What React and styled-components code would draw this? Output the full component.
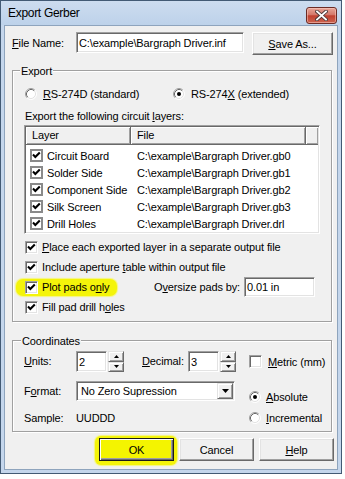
import React from 'react';
import styled, { createGlobalStyle } from 'styled-components';

const Global = createGlobalStyle`
  html, body { margin: 0; padding: 0; background: #fff; }
  body {
    font-family: "Liberation Sans", Arial, sans-serif;
    font-size: 11px;
    letter-spacing: -0.12px;
    color: #000;
  }
  #root { width: 345px; height: 479px; }
`;

const Window = styled.div`
  box-sizing: border-box;
  width: 342px;
  height: 474px;
  border: 1px solid #435a74;
  background: #c4d6ec;
  padding: 0 3px 3px 3px;
  display: flex;
  flex-direction: column;
`;

const TitleBar = styled.div`
  height: 24px;
  flex: none;
  display: flex;
  align-items: flex-start;
  justify-content: space-between;
  padding: 0 1px 0 4px;
  background: linear-gradient(#cddcef, #bdd2ea);
  margin: 0 -3px;
  padding-left: 7px;
  padding-right: 4px;
`;

const Title = styled.div`
  font-size: 12px;
  letter-spacing: -0.3px;
  line-height: 24px;
`;

const CloseBtn = styled.div`
  width: 31px;
  height: 17px;
  box-sizing: border-box;
  margin-top: 6px;
  border: 1px solid #6b2b25;
  border-radius: 3px;
  background: linear-gradient(#e7a597 0%, #d4786a 45%, #c0402f 52%, #cc6450 100%);
  box-shadow: inset 0 0 0 1px rgba(255, 210, 200, 0.5);
  display: flex;
  align-items: center;
  justify-content: center;
`;

const Client = styled.div`
  flex: 1;
  background: #f0f0f0;
  border: 1px solid #8ea4bd;
  padding: 6px 3px 0 7px;
  display: flex;
  flex-direction: column;
`;

const U = styled.span`
  text-decoration: underline;
  text-underline-offset: 1px;
`;

const FileRow = styled.div`
  display: flex;
  align-items: flex-start;
  height: 23px;
`;

const FieldLabel = styled.span`
  flex: none;
  width: ${(p) => p.$w}px;
  line-height: ${(p) => p.$lh || 21}px;
  white-space: nowrap;
`;

const TextBox = styled.div`
  flex: none;
  box-sizing: border-box;
  width: ${(p) => p.$w}px;
  height: ${(p) => p.$h || 21}px;
  margin-right: ${(p) => p.$mr || 0}px;
  background: #fff;
  border: 1px solid;
  border-color: #a0a0a0 #fff #fff #a0a0a0;
  box-shadow: inset 1px 1px #696969, inset -1px -1px #e3e3e3;
  padding: 0 2px;
  display: flex;
  align-items: center;
  white-space: nowrap;
  overflow: hidden;
`;

const PushButton = styled.button`
  flex: none;
  box-sizing: border-box;
  width: ${(p) => p.$w || 75}px;
  height: 23px;
  padding: 0;
  font: inherit;
  letter-spacing: inherit;
  color: #000;
  background: ${(p) => (p.$yellow ? '#f4f400' : '#f0f0f0')};
  border: 1px solid;
  border-color: #fff #696969 #696969 #fff;
  box-shadow: inset -1px -1px #a0a0a0, inset 1px 1px #e3e3e3;
  ${(p) =>
    p.$default &&
    `
    border: 1px solid #1a1a1a;
    box-shadow: inset 1px 1px #fff, inset -1px -1px #696969, inset -2px -2px #a0a0a0;
  `}
`;

const Group = styled.div`
  position: relative;
  box-sizing: border-box;
  width: 320px;
  margin-top: ${(p) => p.$mt}px;
  padding: ${(p) => p.$pad};
  border: 1px solid #a0a0a0;
  box-shadow: inset 1px 1px #fff, 1px 1px #fff;
`;

const Legend = styled.span`
  position: absolute;
  left: ${(p) => p.$x}px;
  top: -7px;
  padding: 0 1px;
  background: #f0f0f0;
  line-height: 14px;
`;

const RadioRow = styled.div`
  display: flex;
  align-items: center;
  height: 16px;
  margin-top: ${(p) => p.$mt || 0}px;
`;

const OptionItem = styled.div`
  display: flex;
  align-items: center;
  gap: ${(p) => p.$gap || 6}px;
  width: ${(p) => (p.$w ? `${p.$w}px` : 'auto')};
  flex: none;
  white-space: nowrap;
`;

const Caption = styled.div`
  height: 14px;
  line-height: 14px;
  margin-top: ${(p) => p.$mt || 0}px;
`;

const ListBox = styled.div`
  box-sizing: border-box;
  width: 296px;
  height: 109px;
  margin: 2px 0 0 -1px;
  background: #fff;
  border: 1px solid;
  border-color: #a0a0a0 #fff #fff #a0a0a0;
  box-shadow: inset 1px 1px #696969, inset -1px -1px #e3e3e3;
  padding: 1px;
  display: flex;
  flex-direction: column;
`;

const Header = styled.div`
  display: flex;
  height: 18px;
  flex: none;
  background: #f0f0f0;
`;

const HeaderCell = styled.div`
  box-sizing: border-box;
  width: ${(p) => (p.$w ? `${p.$w}px` : 'auto')};
  flex: ${(p) => (p.$w ? 'none' : '1')};
  padding-left: 6px;
  line-height: 17px;
  box-shadow: inset 1px 1px #fff, inset -1px -1px #a0a0a0;
  border-right: 1px solid #696969;
  border-bottom: 1px solid #696969;
  ${(p) => !p.$w && 'border-right: none;'}
`;

const Rows = styled.div`
  display: flex;
  flex-direction: column;
  margin-top: 2px;
`;

const ListRow = styled.div`
  display: flex;
  align-items: center;
  height: 17px;
`;

const Cell = styled.div`
  box-sizing: border-box;
  width: ${(p) => p.$w}px;
  padding-left: ${(p) => p.$pl}px;
  display: flex;
  align-items: center;
  gap: 4px;
  white-space: nowrap;
`;

const CheckRow = styled.div`
  display: flex;
  align-items: center;
  height: 20px;
  margin-top: ${(p) => p.$mt || 0}px;
`;

const Highlight = styled.div`
  display: flex;
  align-items: center;
  gap: 4px;
  width: 120px;
  flex: none;
  padding: 2px 0 2px 9px;
  margin: -2px 0 -2px -9px;
  height: 20px;
`;

const Marker = styled.span`
  display: flex;
  align-items: center;
  gap: 4px;
  background: #f4f40a;
  border-radius: 7px;
  padding: 2px 8px 2px 9px;
  margin: -2px -8px -2px -9px;
  box-shadow: 0 0 1px 1px #f6f67a;
`;

const CheckBox = styled.span`
  box-sizing: border-box;
  flex: none;
  width: 13px;
  height: 13px;
  background: #fff;
  border: 1px solid;
  border-color: #a0a0a0 #fff #fff #a0a0a0;
  box-shadow: inset 1px 1px #696969, inset -1px -1px #e3e3e3;
  display: flex;
  align-items: center;
  justify-content: center;
  ${(p) =>
    p.$flat &&
    `
    border: 2px solid #8a8a8a;
    box-shadow: none;
  `}
`;

const CoordRow = styled.div`
  display: flex;
  align-items: center;
  height: 21px;
`;

const Spin = styled.div`
  display: flex;
  flex: none;
  gap: 1px;
`;

const SpinButtons = styled.div`
  display: flex;
  flex-direction: column;
  width: 16px;
  height: 21px;
`;

const SpinBtn = styled.div`
  box-sizing: border-box;
  flex: 1;
  background: #f0f0f0;
  border: 1px solid;
  border-color: #e3e3e3 #696969 #696969 #e3e3e3;
  box-shadow: inset 1px 1px #fff, inset -1px -1px #a0a0a0;
  display: flex;
  align-items: center;
  justify-content: center;
`;

const Spacer = styled.div`
  flex: none;
  width: ${(p) => p.$w}px;
`;

const Lower = styled.div`
  display: flex;
`;

const LeftCol = styled.div`
  width: 211px;
  flex: none;
  display: flex;
  flex-direction: column;
`;

const RightCol = styled.div`
  display: flex;
  flex-direction: column;
  gap: 5px;
  margin: 17px 0 0 14px;
`;

const FormatRow = styled.div`
  display: flex;
  align-items: center;
  height: 20px;
  margin-top: 9px;
`;

const Combo = styled.div`
  box-sizing: border-box;
  width: 159px;
  height: 20px;
  background: #fff;
  border: 1px solid;
  border-color: #a0a0a0 #fff #fff #a0a0a0;
  box-shadow: inset 1px 1px #696969, inset -1px -1px #e3e3e3;
  padding: 1px 1px 1px 4px;
  display: flex;
  align-items: center;
  justify-content: space-between;
`;

const ComboArrow = styled.div`
  box-sizing: border-box;
  width: 16px;
  height: 16px;
  background: #f0f0f0;
  border: 1px solid;
  border-color: #e3e3e3 #696969 #696969 #e3e3e3;
  box-shadow: inset 1px 1px #fff, inset -1px -1px #a0a0a0;
  display: flex;
  align-items: center;
  justify-content: center;
`;

const SampleRow = styled.div`
  display: flex;
  height: 14px;
  line-height: 14px;
  margin-top: 10px;
`;

const ButtonRow = styled.div`
  display: flex;
  justify-content: flex-end;
  gap: 5px;
  margin-top: 6px;
`;

const OkMark = styled.div`
  display: flex;
  background: #f4f40a;
  border-radius: 6px;
  padding: 2px 3px 4px 4px;
  margin: -2px -3px -4px -4px;
  box-shadow: 0 0 1px 1px #f6f67a;
`;

const Check = () => (
  <svg width="9" height="9" viewBox="0 0 9 9">
    <path d="M1 3.6 L3.3 5.9 L7.8 1.4" fill="none" stroke="#000" strokeWidth="2.1" />
  </svg>
);

const Radio = ({ on }) => (
  <svg width="12" height="12" viewBox="0 0 12 12" style={{ flex: 'none' }}>
    <circle cx="6" cy="6" r="5" fill="#fff" />
    <path d="M2.11 9.89 A5.5 5.5 0 0 1 9.89 2.11" fill="none" stroke="#a0a0a0" />
    <path d="M9.89 2.11 A5.5 5.5 0 0 1 2.11 9.89" fill="none" stroke="#fff" />
    <path d="M2.82 9.18 A4.5 4.5 0 0 1 9.18 2.82" fill="none" stroke="#696969" />
    <path d="M9.18 2.82 A4.5 4.5 0 0 1 2.82 9.18" fill="none" stroke="#e3e3e3" />
    {on && <circle cx="6" cy="6" r="2" fill="#000" />}
  </svg>
);

const Tri = ({ up }) => (
  <svg width="5" height="3" viewBox="0 0 5 3">
    <path d={up ? 'M0 3 L2.5 0 L5 3 Z' : 'M0 0 L5 0 L2.5 3 Z'} fill="#000" />
  </svg>
);

const layers = [
  ['Circuit Board', 'gb0'],
  ['Solder Side', 'gb1'],
  ['Component Side', 'gb2'],
  ['Silk Screen', 'gb3'],
  ['Drill Holes', 'drl'],
];

function SpinEdit({ value }) {
  return (
    <Spin>
      <TextBox $w={31} $h={21}>{value}</TextBox>
      <SpinButtons>
        <SpinBtn><Tri up /></SpinBtn>
        <SpinBtn><Tri /></SpinBtn>
      </SpinButtons>
    </Spin>
  );
}

export default function App() {
  return (
    <>
      <Global />
      <Window>
        <TitleBar>
          <Title>Export Gerber</Title>
          <CloseBtn>
            <svg width="13" height="11" viewBox="0 0 13 11">
              <path d="M2 1.5 L11 9.5 M11 1.5 L2 9.5" stroke="#4a3636" strokeWidth="3.6" strokeLinecap="square" />
              <path d="M2 1.5 L11 9.5 M11 1.5 L2 9.5" stroke="#fff" strokeWidth="1.8" strokeLinecap="square" />
            </svg>
          </CloseBtn>
        </TitleBar>
        <Client>
          <FileRow>
            <FieldLabel $w={64} $lh={23}><U>F</U>ile Name:</FieldLabel>
            <TextBox $w={168} $h={21} $mr={8}>C:\example\Bargraph Driver.inf</TextBox>
            <PushButton $w={81}><U>S</U>ave As...</PushButton>
          </FileRow>

          <Group $mt={15} $pad="15px 12px 4px 12px">
            <Legend $x={7}>Export</Legend>
            <RadioRow>
              <OptionItem $w={148}>
                <Radio />
                <span><U>R</U>S-274D (standard)</span>
              </OptionItem>
              <OptionItem>
                <Radio on />
                <span>RS-274<U>X</U> (extended)</span>
              </OptionItem>
            </RadioRow>
            <Caption $mt={7}>Export the following circuit <U>l</U>ayers:</Caption>
            <ListBox>
              <Header>
                <HeaderCell $w={105}>Layer</HeaderCell>
                <HeaderCell $w={175}>File</HeaderCell>
                <HeaderCell />
              </Header>
              <Rows>
                {layers.map(([name, ext]) => (
                  <ListRow key={name}>
                    <Cell $w={105} $pl={4}>
                      <CheckBox $flat><Check /></CheckBox>
                      <span>{name}</span>
                    </Cell>
                    <Cell $w={180} $pl={6}>C:\example\Bargraph Driver.{ext}</Cell>
                  </ListRow>
                ))}
              </Rows>
            </ListBox>
            <CheckRow $mt={3}>
              <OptionItem $gap={4}>
                <CheckBox><Check /></CheckBox>
                <span><U>P</U>lace each exported layer in a separate output file</span>
              </OptionItem>
            </CheckRow>
            <CheckRow>
              <OptionItem $gap={4}>
                <CheckBox><Check /></CheckBox>
                <span>Include aperture <U>t</U>able within output file</span>
              </OptionItem>
            </CheckRow>
            <CheckRow>
              <OptionItem $w={129}>
                <Marker>
                  <CheckBox><Check /></CheckBox>
                  <span>Plot pads o<U>n</U>ly</span>
                </Marker>
              </OptionItem>
              <FieldLabel $w={90} $lh={20}>O<U>v</U>ersize pads by:</FieldLabel>
              <TextBox $w={71} $h={20}>0.01 in</TextBox>
            </CheckRow>
            <CheckRow>
              <OptionItem $gap={4}>
                <CheckBox><Check /></CheckBox>
                <span>Fill pad drill h<U>o</U>les</span>
              </OptionItem>
            </CheckRow>
          </Group>

          <Group $mt={18} $pad="10px 8px 5px 11px">
            <Legend $x={8}>Coordinates</Legend>
            <CoordRow>
              <FieldLabel $w={52}><U>U</U>nits:</FieldLabel>
              <SpinEdit value="2" />
              <Spacer $w={18} />
              <FieldLabel $w={46}><U>D</U>ecimal:</FieldLabel>
              <SpinEdit value="3" />
              <Spacer $w={13} />
              <OptionItem $gap={6}>
                <CheckBox />
                <span><U>M</U>etric (mm)</span>
              </OptionItem>
            </CoordRow>
            <Lower>
              <LeftCol>
                <FormatRow>
                  <FieldLabel $w={52} $lh={20}>F<U>o</U>rmat:</FieldLabel>
                  <Combo>
                    <span>No Zero Supression</span>
                    <ComboArrow>
                      <svg width="7" height="4" viewBox="0 0 7 4">
                        <path d="M0 0 L7 0 L3.5 4 Z" fill="#000" />
                      </svg>
                    </ComboArrow>
                  </Combo>
                </FormatRow>
                <SampleRow>
                  <FieldLabel $w={52} $lh={14}>Sample:</FieldLabel>
                  <span>UUDDD</span>
                </SampleRow>
              </LeftCol>
              <RightCol>
                <RadioRow>
                  <OptionItem $gap={5}>
                    <Radio on />
                    <span><U>A</U>bsolute</span>
                  </OptionItem>
                </RadioRow>
                <RadioRow>
                  <OptionItem $gap={5}>
                    <Radio />
                    <span><U>I</U>ncremental</span>
                  </OptionItem>
                </RadioRow>
              </RightCol>
            </Lower>
          </Group>

          <ButtonRow>
            <OkMark>
              <PushButton $default $yellow>OK</PushButton>
            </OkMark>
            <PushButton>Cancel</PushButton>
            <PushButton><U>H</U>elp</PushButton>
          </ButtonRow>
        </Client>
      </Window>
    </>
  );
}
